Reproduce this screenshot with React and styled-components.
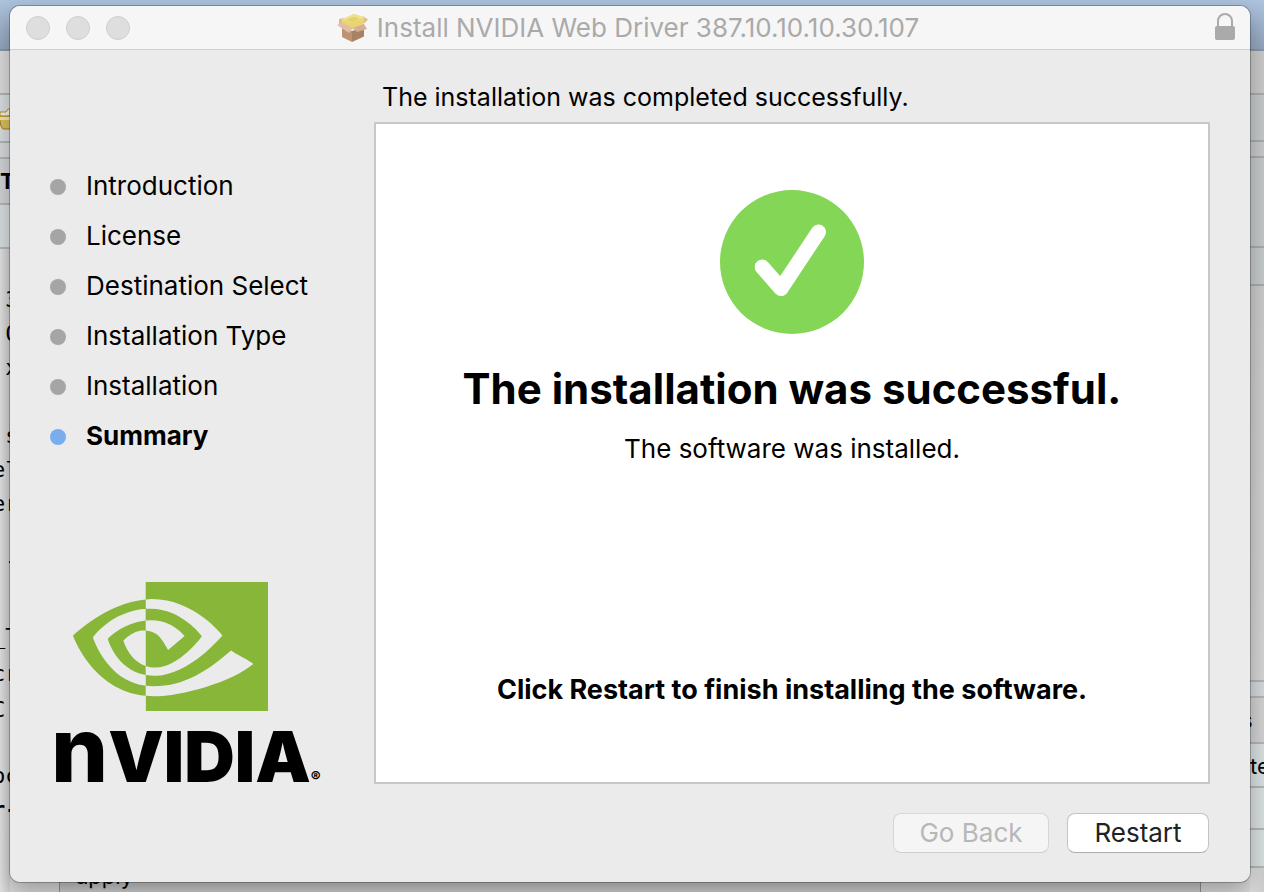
import React from "react";
import styled, { createGlobalStyle } from "styled-components";

const GlobalStyle = createGlobalStyle`
  *, *::before, *::after { box-sizing: border-box; }
  body {
    margin: 0;
    font-family: Inter, "Liberation Sans", sans-serif;
    color: #000;
    background: #a9bed8;
  }
  h1, p, ol { margin: 0; padding: 0; }
`;

const Desktop = styled.div`
  position: relative;
  display: flex;
  flex-direction: column;
  min-height: 100vh;
  padding: 6px 14px 10px 10px;
  overflow: hidden;
  background: linear-gradient(#adc3de, #94a6bd 50px, #dcdcdc 50px);
`;

/* Windows that lie behind the installer */
const Backdrop = styled.div`
  position: absolute;
  inset: 0;
  display: flex;
  justify-content: space-between;
  padding-top: 49px;
`;

const Edge = styled.div`
  width: ${(p) => (p.$right ? "14px" : "10px")};
  display: flex;
  flex-direction: column;
  white-space: pre;
`;

const Band = styled.div`
  flex: none;
  height: ${(p) => p.$h}px;
  background: ${(p) => p.$bg};
  border-top: 2px solid ${(p) => p.$line || "#b2b5b7"};
  font: ${(p) => (p.$bold ? 700 : 400)} 22px/44px Inter, sans-serif;
  text-indent: ${(p) => p.$indent || 0}px;
  svg { display: block; margin-top: 12px; }
`;

const Terminal = styled.div`
  flex: 1;
  padding-top: 34px;
  border-top: 2px solid #b2b8bb;
  background: linear-gradient(90deg, #e4e4e4, #cfcfcf);
`;

const Line = styled.div`
  margin: ${(p) => p.$gap || 0}px 0 0 -8px;
  font: ${(p) => (p.$bold ? 700 : 400)} 22px/34px "DejaVu Sans Mono", monospace;
  color: ${(p) => p.$color || "#000"};
`;

const LowerWindow = styled.div`
  position: absolute;
  bottom: 0;
  left: 59px;
  right: 63px;
  height: 24px;
  padding-left: 16px;
  border: solid #929292;
  border-width: 0 1px;
  background: linear-gradient(#bdbdbd 10px, #d1d1d1);
  font: 22px/16px Inter, sans-serif;
`;

const Dialog = styled.main`
  position: relative;
  flex: 1;
  display: flex;
  flex-direction: column;
  overflow: hidden;
  border-radius: 10px;
  background: #ebebeb;
`;

const DialogShadow = styled.div`
  position: relative;
  flex: 1;
  display: flex;
  border-radius: 10px;
  box-shadow: 0 0 0 1px rgba(0, 0, 0, 0.25), 0 10px 24px rgba(0, 0, 0, 0.3);
`;

const TitleBar = styled.header`
  display: grid;
  grid-template-columns: 1fr auto 1fr;
  align-items: center;
  height: 44px;
  padding: 0 14px 0 10px;
  background: #f6f6f6;
  border-bottom: 1px solid #cecece;
`;

const Lights = styled.div`
  display: flex;
  gap: 16px;
  padding-left: 6px;
`;

const Light = styled.button`
  width: 24px;
  height: 24px;
  padding: 0;
  border: 1px solid #cfcfcf;
  border-radius: 50%;
  background: #dedede;
`;

const Title = styled.div`
  display: flex;
  align-items: center;
  gap: 8px;
  font-size: 26px;
  line-height: 32px;
  color: #aaa;
  white-space: nowrap;
`;

const LockSlot = styled.div`
  display: flex;
  justify-content: flex-end;
`;

const Body = styled.div`
  flex: 1;
  display: flex;
`;

const Sidebar = styled.aside`
  flex: none;
  width: 364px;
  display: flex;
  flex-direction: column;
  justify-content: space-between;
  padding: 110px 0 92px 40px;
`;

const Steps = styled.ol`
  list-style: none;
`;

const Step = styled.li`
  display: flex;
  align-items: center;
  gap: 20px;
  height: 50px;
  font-size: 26px;
  font-weight: ${(p) => (p.$current ? 700 : 400)};
  &::before {
    content: "";
    width: 16px;
    height: 16px;
    margin-top: 4px;
    border-radius: 50%;
    background: ${(p) => (p.$current ? "#78aeed" : "#a5a5a5")};
  }
`;

const Logo = styled.svg`
  display: block;
  width: 284px;
  height: 210px;
`;

const Content = styled.section`
  flex: 1;
  display: flex;
  flex-direction: column;
  padding: 31px 40px 29px 0;
`;

const Status = styled.p`
  padding-left: 8px;
  font-size: 25px;
  line-height: 32px;
`;

const Panel = styled.div`
  flex: 1;
  display: flex;
  flex-direction: column;
  align-items: center;
  margin-top: 9px;
  padding: 66px 16px 76px;
  border: 2px solid #c8c8c8;
  background: #fff;
  text-align: center;
`;

const Headline = styled.h1`
  margin-top: 29px;
  font-size: 42px;
  line-height: 52px;
`;

const Detail = styled.p`
  margin-top: 18px;
  font-size: 26px;
  line-height: 32px;
`;

const Instruction = styled.p`
  margin-top: auto;
  font-size: 27px;
  font-weight: 700;
  line-height: 32px;
`;

const Actions = styled.div`
  display: flex;
  justify-content: flex-end;
  gap: 18px;
  margin-top: 29px;
  padding-right: 1px;
`;

const Button = styled.button`
  height: 40px;
  min-width: ${(p) => (p.disabled ? 156 : 142)}px;
  padding: 0 16px;
  border: 1px solid ${(p) => (p.disabled ? "#d6d6d6" : "#c4c4c4")};
  border-bottom-color: ${(p) => (p.disabled ? "#cecece" : "#adadad")};
  border-radius: 8px;
  background: ${(p) => (p.disabled ? "#f5f5f5" : "#fff")};
  color: ${(p) => (p.disabled ? "#b7b7b7" : "#222")};
  font: 26px/32px Inter, sans-serif;
`;

const FolderIcon = () => (
  <svg width="10" height="24" viewBox="0 0 10 24" aria-hidden="true">
    <path d="M0 5h6l2-3h2v8H0z" fill="#f4f1e6" stroke="#b69223" />
    <path d="M-1 9h12v13H3L1 19z" fill="#d9bf5e" stroke="#a47c0c" />
    <path d="M0 10h10v3H0z" fill="#efe6b9" />
  </svg>
);

const PackageIcon = () => (
  <svg width="32" height="30" viewBox="0 0 32 30" aria-hidden="true">
    <path d="M5 14l10 4v11L5 24z" fill="#bd9373" />
    <path d="M15 18l12-4v9.500L15 29z" fill="#a98265" />
    <path d="M2 6l5-1 1 6-6 2z" fill="#dcb699" />
    <path d="M26 3l5 3.500-4 4-2-4z" fill="#dcb699" />
    <path d="M4 7.500L17 1l11 4-2 8-10 3.500L5 12z" fill="#e8d473" />
    <path d="M4 6.500L17 1l11 3.500L15 10z" fill="#efe08a" />
    <path d="M9 7l8-3.500L23 6l-8 3.500z" fill="#e6d068" />
    <path d="M0 12l5-2 11 5-4 5z" fill="#e0bda3" />
    <path d="M16 15l11-4 3 5-10 3z" fill="#d7ae91" />
  </svg>
);

const LockIcon = () => (
  <svg width="22" height="30" viewBox="0 0 22 30" role="img" aria-label="Locked">
    <path d="M4 14V8a7 7 0 0 1 14 0v6" fill="none" stroke="#aaa" strokeWidth="2" />
    <rect x="1" y="13" width="20" height="14" rx="2" fill="#aaa" />
  </svg>
);

const CheckIcon = () => (
  <svg width="144" height="144" viewBox="0 0 144 144" role="img" aria-label="Success">
    <circle cx="72" cy="72" r="72" fill="#84d656" />
    <path
      d="M42.200 77L61 98.500 98.500 42"
      fill="none"
      stroke="#fff"
      strokeWidth="15"
      strokeLinecap="round"
      strokeLinejoin="round"
    />
  </svg>
);

const NvidiaLogo = () => (
  <Logo viewBox="0 0 284 210" role="img" aria-label="NVIDIA">
    <g transform="translate(23 -31) scale(8.125)">
      <path
        fill="#87b638"
        d="M8.948 8.798v-1.43a6.7 6.7 0 0 1 .424-.018c3.922-.124 6.493 3.374 6.493 3.374s-2.774 3.851-5.750 3.851c-.398 0-.787-.062-1.158-.185v-4.346c1.528.185 1.837.857 2.747 2.385l2.040-1.714s-1.492-1.952-4-1.952a6.016 6.016 0 0 0-.796.035m0-4.735v2.138l.424-.027c5.450-.185 9.010 4.470 9.010 4.470s-4.080 4.964-8.330 4.964c-.370 0-.733-.035-1.095-.097v1.325c.300.035.610.062.910.062 3.957 0 6.820-2.023 9.593-4.408.459.371 2.340 1.263 2.730 1.652-2.633 2.208-8.772 3.984-12.253 3.984-.335 0-.653-.018-.971-.053v1.864H24V4.063zm0 10.326v1.131c-3.657-.654-4.673-4.460-4.673-4.460s1.758-1.944 4.673-2.262v1.237H8.940c-1.528-.186-2.730 1.245-2.730 1.245s.680 2.412 2.739 3.110M2.456 10.900s2.164-3.197 6.500-3.533V6.201C4.153 6.590 0 10.653 0 10.653s2.350 6.802 8.948 7.420v-1.237c-4.840-.600-6.492-5.936-6.492-5.936z"
      />
    </g>
    <text x="1" y="202" fontFamily="Inter, sans-serif" fontWeight="900" fontSize="70">
      <tspan fontSize="90" fontWeight="800">n</tspan>VIDIA<tspan fontSize="15">®</tspan>
    </text>
  </Logo>
);

const steps = [
  "Introduction",
  "License",
  "Destination Select",
  "Installation Type",
  "Installation",
  "Summary",
];

const terminalLines = [
  { text: " 3" },
  { text: " 0" },
  { text: " x" },
  { text: " s", gap: 34 },
  { text: "el" },
  { text: "er" },
  { text: " -", gap: 23 },
  { text: "_T", gap: 42 },
  { text: "cr", gap: 3 },
  { text: "C:", gap: 2 },
  { text: "pc", gap: 32 },
  { text: "r-", bold: true },
  { text: "'", color: "#0a4ea0" },
];

export default function App() {
  return (
    <Desktop>
      <GlobalStyle />
      <Backdrop aria-hidden="true">
        <Edge>
          <Band $h={44} $bg="#dcdcdc" $line="#8997a8" />
          <Band $h={48} $bg="#d9dee0"><FolderIcon /></Band>
          <Band $h={16} $bg="#d8dadb" />
          <Band $h={46} $bg="#d3d4d5" $bold>T</Band>
          <Band $h={44} $bg="#d9dfe1" />
          <Terminal>
            {terminalLines.map((l, i) => (
              <Line key={i} $gap={l.gap} $bold={l.bold} $color={l.color}>{l.text}</Line>
            ))}
          </Terminal>
        </Edge>
        <Edge $right>
          <Band $h={44} $bg="#cbcbcb" $line="#8997a8" />
          <Band $h={47} $bg="#c5cacb" $line="#a9acae" />
          <Band $h={16} $bg="#c9cacb" $line="#a9acae" />
          <Band $h={90} $bg="#c5cacb" $line="#a9acae" />
          <Band $h={38} $bg="#c6cbcc" $line="#a9acae" />
          <Band $h={396} $bg="linear-gradient(#cbcbcb, #d6d6d6)" $line="#a9acae" />
          <Band $h={16} $bg="#d5d9db" />
          <Band $h={46} $bg="#d2d2d3" $indent={-9}>s</Band>
          <Band $h={44} $bg="#d9dfe0">te</Band>
          <Band $h={42} $bg="#d9dfe0" />
          <Band $h={38} $bg="#d9dfe0" />
          <Terminal />
        </Edge>
        <LowerWindow>apply</LowerWindow>
      </Backdrop>

      <DialogShadow>
        <Dialog>
          <TitleBar>
            <Lights>
              <Light aria-label="Close" />
              <Light aria-label="Minimize" />
              <Light aria-label="Zoom" />
            </Lights>
            <Title>
              <PackageIcon />
              <span>Install NVIDIA Web Driver 387.10.10.10.30.107</span>
            </Title>
            <LockSlot><LockIcon /></LockSlot>
          </TitleBar>
          <Body>
            <Sidebar>
              <Steps>
                {steps.map((s) => (
                  <Step key={s} $current={s === "Summary"}>{s}</Step>
                ))}
              </Steps>
              <NvidiaLogo />
            </Sidebar>
            <Content>
              <Status>The installation was completed successfully.</Status>
              <Panel>
                <CheckIcon />
                <Headline>The installation was successful.</Headline>
                <Detail>The software was installed.</Detail>
                <Instruction>Click Restart to finish installing the software.</Instruction>
              </Panel>
              <Actions>
                <Button disabled>Go Back</Button>
                <Button>Restart</Button>
              </Actions>
            </Content>
          </Body>
        </Dialog>
      </DialogShadow>
    </Desktop>
  );
}
